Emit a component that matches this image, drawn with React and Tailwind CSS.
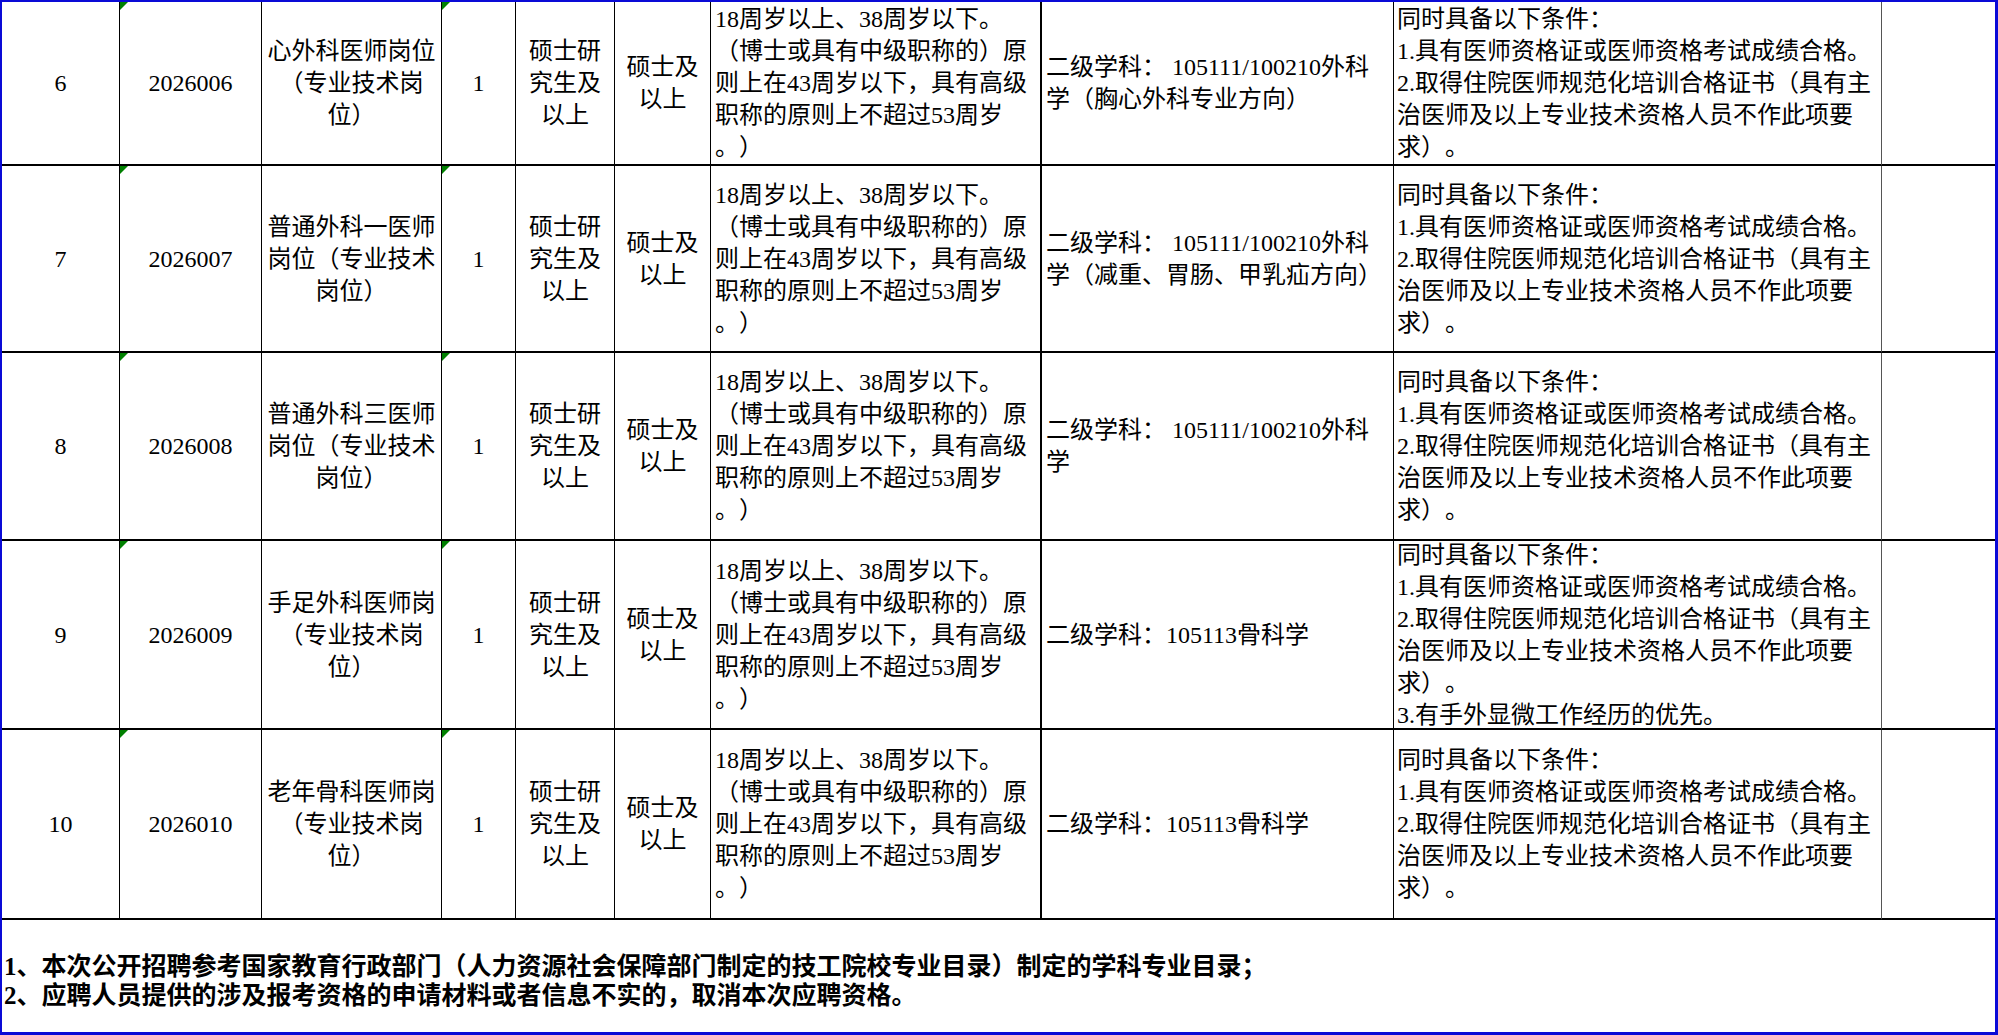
import React from 'react';

const rows = [
  {
    no: '6',
    code: '2026006',
    post: ['心外科医师岗位', '（专业技术岗', '位）'],
    subject: ['二级学科： 105111/100210外科', '学（胸心外科专业方向）'],
    extra: null,
    h: 'h-[164px]',
  },
  {
    no: '7',
    code: '2026007',
    post: ['普通外科一医师', '岗位（专业技术', '岗位）'],
    subject: ['二级学科： 105111/100210外科', '学（减重、胃肠、甲乳疝方向）'],
    extra: null,
    h: 'h-[187px]',
  },
  {
    no: '8',
    code: '2026008',
    post: ['普通外科三医师', '岗位（专业技术', '岗位）'],
    subject: ['二级学科： 105111/100210外科', '学'],
    extra: null,
    h: 'h-[188px]',
  },
  {
    no: '9',
    code: '2026009',
    post: ['手足外科医师岗', '（专业技术岗', '位）'],
    subject: ['二级学科：105113骨科学'],
    extra: '3.有手外显微工作经历的优先。',
    h: 'h-[189px]',
  },
  {
    no: '10',
    code: '2026010',
    post: ['老年骨科医师岗', '（专业技术岗', '位）'],
    subject: ['二级学科：105113骨科学'],
    extra: null,
    h: 'h-[190px]',
  },
];

const ageLines = [
  '18周岁以上、38周岁以下。',
  '（博士或具有中级职称的）原',
  '则上在43周岁以下，具有高级',
  '职称的原则上不超过53周岁',
  '。）',
];

const reqLines = [
  '同时具备以下条件：',
  '1.具有医师资格证或医师资格考试成绩合格。',
  '2.取得住院医师规范化培训合格证书（具有主',
  '治医师及以上专业技术资格人员不作此项要',
  '求）。',
];

const Flag = () => (
  <svg className="absolute left-0 top-0" width="8" height="8" viewBox="0 0 8 8">
    <polygon points="0,0 8,0 0,8" fill="#008000" />
  </svg>
);

const Lines = ({ lines }) => lines.map((l, i) => <div key={i}>{l}</div>);

// centred cells (number, code, post, count, education, degree)
const center = 'flex flex-col items-center justify-center text-center border-b-2 border-black';
// left-aligned cells, still vertically centred like Excel
const left = 'flex flex-col items-start justify-center text-left whitespace-nowrap border-b-2 border-black';

export default function App() {
  return (
    <div
      className="w-[1998px] h-[1035px] bg-white border-l-2 border-t-2 border-r-[3px] border-b-[3px] border-[#0a0ad6] flex flex-col text-black text-[24px] leading-[32px] [text-spacing-trim:space-all]"
      style={{ fontFamily: '"Liberation Serif", "Noto Sans CJK SC", serif' }}
    >
      <div className="grid grid-cols-[118px_142px_180px_74px_99px_96px_331px_352px_488px_113px]">
        {rows.map((r) => (
          <React.Fragment key={r.no}>
            <div className={`${center} ${r.h} border-r border-r-black`}>{r.no}</div>
            <div className={`${center} ${r.h} relative border-r border-r-black`}>
              <Flag />
              {r.code}
            </div>
            <div className={`${center} ${r.h} border-r border-r-black`}>
              <Lines lines={r.post} />
            </div>
            <div className={`${center} ${r.h} relative border-r border-r-black`}>
              <Flag />
              1
            </div>
            <div className={`${center} ${r.h} border-r border-r-black`}>
              <Lines lines={['硕士研', '究生及', '以上']} />
            </div>
            <div className={`${center} ${r.h} border-r border-r-black`}>
              <Lines lines={['硕士及', '以上']} />
            </div>
            <div className={`${left} ${r.h} pl-[4px] border-r-2 border-r-black`}>
              <Lines lines={ageLines} />
            </div>
            <div className={`${left} ${r.h} pl-[4px] border-r border-r-black`}>
              <Lines lines={r.subject} />
            </div>
            <div className={`${left} ${r.h} pl-[3px] border-r border-r-[#555]`}>
              <Lines lines={r.extra ? [...reqLines, r.extra] : reqLines} />
            </div>
            <div className={`${r.h} border-b-2 border-black`} />
          </React.Fragment>
        ))}
      </div>
      <div className="flex-1 flex flex-col justify-center pl-[2px] pt-[10px] font-semibold text-[25px] leading-[29px] whitespace-nowrap">
        <div>1、本次公开招聘参考国家教育行政部门（人力资源社会保障部门制定的技工院校专业目录）制定的学科专业目录；</div>
        <div>2、应聘人员提供的涉及报考资格的申请材料或者信息不实的，取消本次应聘资格。</div>
      </div>
    </div>
  );
}
